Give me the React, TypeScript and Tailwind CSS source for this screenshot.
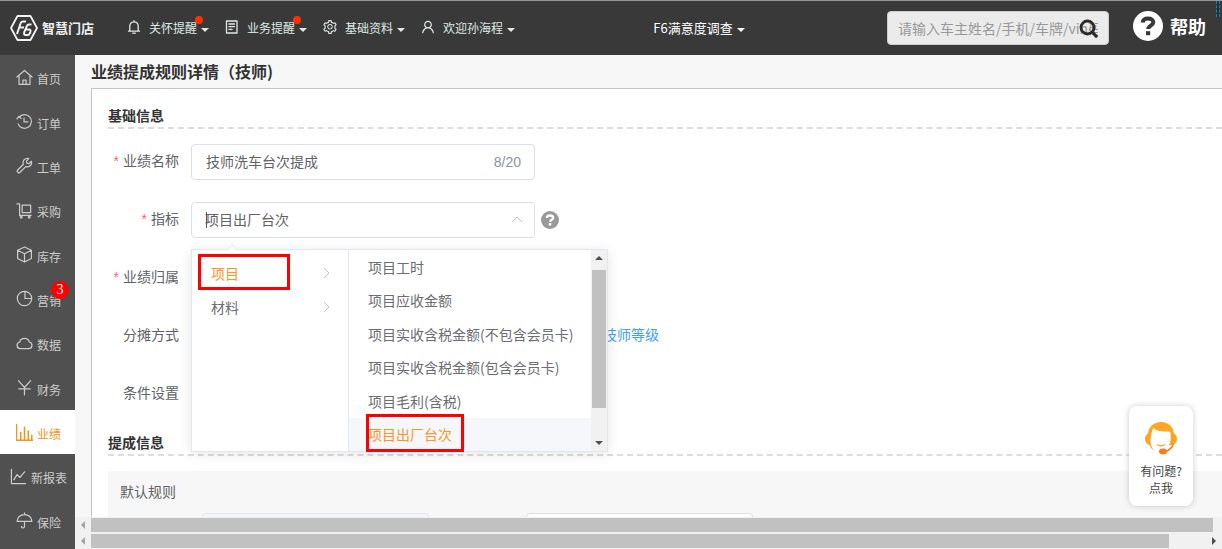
import { useState } from "react";
import type { ReactNode } from "react";
import { AiOutlineSetting, AiOutlineUser } from "react-icons/ai";

const line = {
  fill: "none",
  stroke: "currentColor",
  strokeWidth: 1.3,
  strokeLinejoin: "round" as const,
  strokeLinecap: "round" as const,
};

function SideIcon({ children }: { children: ReactNode }) {
  return (
    <svg viewBox="0 0 18 18" className="mb-1 size-[17px] shrink-0" aria-hidden="true" {...line}>
      {children}
    </svg>
  );
}

const menu = [
  { name: "首页", icon: <path d="M1 8.5 9 1.5l8 7M3.2 7v9.3h11.6V7M7.3 16.3v-4.5h3.4v4.5" /> },
  {
    name: "订单",
    icon: (
      <>
        <path d="M2.2 11.5A7.3 7.3 0 1 0 3.3 4.4M1 6.2l2-2.6 2.3 2" />
        <path d="M8.5 5.5v4h4" />
      </>
    ),
  },
  {
    name: "工单",
    icon: (
      <path d="M13.6 1.7a4.6 4.6 0 0 0-5.8 6L1.6 14a1.3 1.3 0 0 0 0 1.8l.6.6a1.3 1.3 0 0 0 1.8 0l6.3-6.2a4.6 4.6 0 0 0 6-5.7l-2.6 2.6-2.2-.6-.5-2.2z" />
    ),
  },
  {
    name: "采购",
    icon: (
      <>
        <path d="M1 2h2.8v12.2H16M6.5 3.2h9v8h-9z" />
        <circle cx="5.5" cy="16" r="1" />
        <circle cx="14" cy="16" r="1" />
      </>
    ),
  },
  { name: "库存", icon: <path d="M9 1 16.3 4.5v8.8L9 17l-7.3-3.7V4.5zM1.7 4.5 9 8.2l7.3-3.7M9 8.2V17" /> },
  {
    name: "营销",
    badge: 3,
    icon: (
      <>
        <circle cx="9" cy="9" r="7.6" />
        <path d="M9.5 1.4V9h7" />
      </>
    ),
  },
  {
    name: "数据",
    icon: <path d="M4.5 14.5a3.6 3.6 0 0 1-.6-7.1 5.3 5.3 0 0 1 10.2 0 3.6 3.6 0 0 1-.6 7.1z" />,
  },
  { name: "财务", icon: <path d="M2.5 1.8 9 9l6.5-7.2M9 9v7.7M3 10.5h12" /> },
  {
    name: "业绩",
    active: true,
    icon: <path d="M.5 0v17.3H18M5 17V9M9 17V3.5M13 17V7.5M16.7 17v-5" strokeWidth="1.6" />,
  },
  { name: "新报表", icon: <path d="M1.5 1.5v15h15M4 12.5l3.5-5.5 3 3 5-6" /> },
  {
    name: "保险",
    icon: <path d="M9 1v1.7M1.2 10a7.8 7.3 0 0 1 15.6 0zM9 10v5.3a1.6 1.6 0 0 1-3.2 0" />,
  },
];

const indicators = [
  "项目工时",
  "项目应收金额",
  "项目实收含税金额(不包含会员卡)",
  "项目实收含税金额(包含会员卡)",
  "项目毛利(含税)",
  "项目出厂台次",
];

function Caret() {
  return (
    <svg viewBox="0 0 8 4" className="mt-1 h-1 w-2" aria-hidden="true">
      <path d="M0 0h8L4 4z" fill="currentColor" />
    </svg>
  );
}

function NavItem({ icon, label, dot }: { icon: ReactNode; label: string; dot?: boolean }) {
  return (
    <button className="flex items-center text-xs text-[#dfe9e5]">
      <span className="mr-2 mb-0.5 flex w-3.5 justify-center text-base">{icon}</span>
      <span className="relative">
        {label}
        {dot && <i className="absolute -top-1 -right-1.5 size-2 rounded-full bg-[#ff3000]" />}
      </span>
      <span className="ml-1">
        <Caret />
      </span>
    </button>
  );
}

function QuestionMark({ className }: { className: string }) {
  return (
    <svg viewBox="0 0 20 20" className={className} fill="none" stroke="currentColor" aria-hidden="true">
      <path d="M4.5 6.500C5 3.700 7.200 2.400 10 2.400c3.200 0 5.300 1.600 5.300 3.900 0 3.400-5.100 3.200-5.100 6.700" strokeWidth="4" />
      <path d="M8 15.200h4.200v4H8z" fill="currentColor" stroke="none" />
    </svg>
  );
}

function Header() {
  return (
    <header className="relative flex h-[55px] shrink-0 items-center border-t border-[#999] bg-[#393939] text-white">
      <a href="#" className="ml-2.5 flex w-[117px] shrink-0 items-center gap-1">
        <svg viewBox="0 0 28 26" className="h-[26px] w-7" fill="none" stroke="#f2f2f2" aria-hidden="true">
          <path d="M7.5 1h13L27 13l-6.500 12h-13L1 13z" strokeWidth="1.8" strokeLinejoin="round" />
          <path d="M7 19 10.500 8.500q.6-2 2.500-2H16M9.500 12.500h4.500" strokeWidth="2" />
          <path d="M21.500 9.500H19q-1.500 0-2.200 1.600l-2.500 6q-1 3 1.700 3h1.500q1.700 0 2.300-1.700l.6-1.800q.6-2-1.400-2h-3.300" strokeWidth="2" />
        </svg>
        <span className="text-[13px] font-bold text-[#eee]">智慧门店</span>
      </a>
      <nav className="flex shrink-0 items-center gap-4">
        <NavItem
          icon={
            <svg viewBox="0 0 14 14" className="size-3.5" aria-hidden="true" {...line}>
              <path d="M7 .7v1M2.800 11V6a4.200 4.200 0 0 1 8.400 0v5M1.500 11.200h11M5.700 13.200h2.600" />
            </svg>
          }
          label="关怀提醒"
          dot
        />
        <NavItem
          icon={
            <svg viewBox="0 0 14 14" className="size-3.5" aria-hidden="true" {...line}>
              <path d="M1.500 1h10.500v12H1.500zM4 4h5.500M4 6.700h5.500M4 9.400h3" />
            </svg>
          }
          label="业务提醒"
          dot
        />
        <NavItem icon={<AiOutlineSetting className="shrink-0" />} label="基础资料" />
        <NavItem icon={<AiOutlineUser className="shrink-0" />} label="欢迎孙海程" />
      </nav>
      <div className="flex flex-1 justify-center pr-1">
        <button className="flex items-center gap-1 text-[13px]">
          F6满意度调查
          <Caret />
        </button>
      </div>
      <div className="relative w-[222px] shrink-0">
        <input
          type="text"
          aria-label="搜索"
          placeholder="请输入车主姓名/手机/车牌/vin码"
          className="block h-[34px] w-full rounded border border-[#ccc] bg-[#ebebeb] px-2.5 text-sm placeholder:text-[#999]"
        />
        <button aria-label="查询" className="absolute top-2 right-2.5">
          <svg viewBox="0 0 20 20" className="size-5" fill="none" stroke="#2b2b2b" aria-hidden="true">
            <circle cx="8.500" cy="8.500" r="6.500" strokeWidth="2.800" />
            <path d="m13.200 13.200 5 5" strokeWidth="3.200" />
          </svg>
        </button>
      </div>
      <a href="#" className="mr-4 ml-6 flex shrink-0 items-center gap-[7px] text-lg font-bold">
        <span className="mb-1 flex size-[30px] items-center justify-center rounded-full bg-white">
          <QuestionMark className="size-5 text-[#393939]" />
        </span>
        <span className="mb-1">帮助</span>
      </a>
      <i className="absolute top-0 right-0.5 h-4 w-1 border-x border-dashed border-[#1f7fb0] bg-[#20323c]" />
    </header>
  );
}

function Sidebar() {
  return (
    <aside className="w-[75px] shrink-0 bg-[#505050] pb-1.5">
      <ul className="flex h-full flex-col">
        {menu.map((m) => (
          <li key={m.name} className="min-h-0 flex-1">
            <a
              href="#"
              className={
                m.active
                  ? "flex h-full items-center justify-center gap-1 bg-white pt-1 pl-0.5 text-xs text-[#f5921e]"
                  : "flex h-full items-center justify-center gap-1 pt-1 pl-0.5 text-xs text-[#ccc]"
              }
            >
              <SideIcon>{m.icon}</SideIcon>
              <span className="relative">
                {m.name}
                {m.badge && (
                  <b className="absolute -top-3 -right-2 flex size-[18px] items-center justify-center rounded-full bg-[#f00] font-['Liberation_Serif',serif] text-sm font-normal text-white">
                    {m.badge}
                  </b>
                )}
              </span>
            </a>
          </li>
        ))}
      </ul>
    </aside>
  );
}

function FormRow({ label, htmlFor, required, children }: { label: string; htmlFor?: string; required?: boolean; children?: ReactNode }) {
  return (
    <div className="flex h-9 items-center">
      <label htmlFor={htmlFor} className="w-[83px] shrink-0 pr-3 pb-1 text-right text-[#606266]">
        {required && <span className="mr-1 font-['Liberation_Sans',sans-serif] text-[#f56c6c]">*</span>}
        {label}
      </label>
      {children}
    </div>
  );
}

function ScrollArrow({ d, className }: { d: string; className?: string }) {
  return (
    <svg viewBox="0 0 8 8" className={className ?? "size-2"} aria-hidden="true">
      <path d={d} fill="currentColor" />
    </svg>
  );
}

function CascaderMenu({ value, onPick }: { value: string; onPick: (v: string) => void }) {
  return (
    <div className="absolute top-[47px] left-0 z-10 flex h-[203px] w-[417px] border border-[#e4e7ed] bg-white shadow-[0_2px_12px_rgba(0,0,0,0.1)]">
      <i className="absolute -top-1 left-9 size-2 rotate-45 border-t border-l border-[#e9ebf0] bg-white" />
      <ul className="w-[157px] shrink-0 border-r border-[#e4e7ed] pt-1.5 text-[#6b6d71]">
        {["项目", "材料"].map((g, i) => (
          <li key={g}>
            <button
              className={
                i === 0
                  ? "flex h-[34px] w-full items-center justify-between pr-[18px] pl-[19px] text-[#ff9326]"
                  : "flex h-[34px] w-full items-center justify-between pr-[18px] pl-[19px]"
              }
            >
              {g}
              <svg viewBox="0 0 7 12" className="h-3 w-[7px]" fill="none" stroke="#b9c3d3" aria-hidden="true">
                <path d="m1 1 5 5-5 5" />
              </svg>
            </button>
          </li>
        ))}
      </ul>
      <ul className="grid flex-1 grid-rows-6 text-[#6b6d71]">
        {indicators.map((name) => (
          <li key={name}>
            <button
              onClick={() => onPick(name)}
              className={
                name === value
                  ? "h-full w-full bg-[#f5f7fa] pl-[19px] text-left text-[#ff9326]"
                  : "h-full w-full pl-[19px] text-left"
              }
            >
              {name}
            </button>
          </li>
        ))}
      </ul>
      <div className="flex w-4 shrink-0 flex-col items-center bg-[#f1f1f1] py-1 text-[#505050]">
        <ScrollArrow d="M0 6h8L4 2z" />
        <i className="mt-2 h-[138px] w-3.5 bg-[#c1c1c1]" />
        <ScrollArrow d="M0 2h8L4 6z" className="mt-auto size-2" />
      </div>
      <i className="absolute top-1 left-1.5 h-9 w-[92px] border-3 border-[#f00]" />
      <i className="absolute top-[164px] left-[174px] h-[38px] w-[98px] border-3 border-[#f00]" />
    </div>
  );
}

function SectionTitle({ children }: { children: ReactNode }) {
  return <h2 className="border-b-2 border-dashed border-[#ddd] pb-0.5 text-sm font-bold text-[#333]">{children}</h2>;
}

export default function App() {
  const [name, setName] = useState("技师洗车台次提成");
  const [indicator, setIndicator] = useState("项目出厂台次");

  return (
    <div className="relative flex h-screen flex-col overflow-hidden bg-[#f7f7f7] font-['Noto_Sans_CJK_SC',sans-serif] text-sm">
      <Header />
      <div className="flex min-h-0 flex-1">
        <Sidebar />
        <div className="flex min-w-0 flex-1 flex-col">
          <h1 className="shrink-0 pt-1 pb-[5px] pl-4 text-base font-bold text-[#333]">业绩提成规则详情（技师)</h1>
          <main className="ml-4 min-h-0 flex-1 overflow-hidden border-t border-l border-[#c4c4c4] bg-white pt-4 pl-4">
            <SectionTitle>基础信息</SectionTitle>
            <div className="mt-[15px] flex flex-col gap-[22px]">
              <FormRow label="业绩名称" htmlFor="rule-name" required>
                <div className="relative w-[344px]">
                  <input
                    id="rule-name"
                    value={name}
                    onChange={(e) => setName(e.target.value)}
                    className="block h-9 w-full rounded border border-[#dcdfe6] px-3.5 pb-0.5 text-[#606266]"
                  />
                  <span className="absolute top-2 right-3.5 font-['Liberation_Sans',sans-serif] text-[#909399]">{name.length}/20</span>
                </div>
              </FormRow>
              <FormRow label="指标" htmlFor="indicator" required>
                <div className="relative w-[344px]">
                  <input
                    id="indicator"
                    value={indicator}
                    readOnly
                    className="block h-9 w-full rounded border border-[#dcdfe6] px-[13px] pb-0.5 text-[#606266]"
                  />
                  <i className="absolute top-2.5 left-[15px] h-4 w-px bg-[#555]" />
                  <svg viewBox="0 0 12 7" className="absolute top-3.5 right-3 h-[7px] w-3" fill="none" stroke="#c0c4cc" aria-hidden="true">
                    <path d="m1 6 5-5 5 5" />
                  </svg>
                  <CascaderMenu value={indicator} onPick={setIndicator} />
                </div>
                <span className="ml-1.5 flex size-[18px] items-center justify-center rounded-full bg-[#999] text-white">
                  <QuestionMark className="size-3" />
                </span>
              </FormRow>
              <FormRow label="业绩归属" required />
              <FormRow label="分摊方式">
                <a href="#" className="ml-[412px] pb-1 text-[#409eff]">
                  技师等级
                </a>
              </FormRow>
              <FormRow label="条件设置" />
            </div>
            <div className="mt-5">
              <SectionTitle>提成信息</SectionTitle>
            </div>
            <section className="mt-[15px] bg-[#f7f7f7] pt-2.5 pb-6">
              <h3 className="pl-3 text-[#606266]">默认规则</h3>
              <div className="mt-3 flex gap-[97px] pl-[94px]">
                <input aria-label="规则条件" disabled className="h-9 w-[227px] rounded border border-[#e4e7ed] bg-[#f5f7fa]" />
                <input aria-label="提成金额" className="h-9 w-[227px] rounded border border-[#dcdfe6] bg-white" />
              </div>
            </section>
          </main>
          <div className="flex h-4 shrink-0 items-center bg-[#f1f1f1] pr-[9px] text-[#a3a3a3]">
            <ScrollArrow d="M6 0v8L2 4z" className="mx-1 size-2" />
            <i className="h-3.5 flex-1 bg-[#c1c1c1]" />
          </div>
          <div className="flex h-4 shrink-0 items-center bg-[#f1f1f1] text-[#a3a3a3]">
            <ScrollArrow d="M6 0v8L2 4z" className="mx-1 size-2" />
            <i className="h-3.5 flex-1 bg-[#c1c1c1]" />
            <ScrollArrow d="M2 0v8l4-4z" className="mr-1 ml-[41px] size-2 text-[#505050]" />
          </div>
        </div>
      </div>
      <button className="absolute right-[29px] bottom-[43px] z-20 flex w-16 flex-col items-center rounded-lg bg-white pt-[15px] pb-2.5 text-xs leading-[17px] text-[#444] shadow-[0_0_6px_rgba(0,0,0,0.2)]">
        <svg viewBox="0 0 34 34" className="mb-[7px] size-[34px]" aria-hidden="true">
          <path
            d="M17 1C9.500 1 4.800 6 4 12.500 2 13.500 1 15.500 1 18c0 3 2 5.500 4.500 6 1 2.500 2.500 4.500 5 6C8 27.500 6.500 24 6.500 20c0-2 .2-4.500.8-7 .5-2.500 1.200-4.500 2.200-6 2.500 3 8.500 3.500 16.500 3.500.7 3 1 6 .5 9-.3 2-1 3.500-1.800 5l1.800-.5C32 23.500 33 20.500 33 18c0-2.700-1-4.500-3-5.500C29.200 6 24.500 1 17 1z"
            fill="#ffa51f"
          />
          <path d="M13 23.500q4 2.700 8 0" fill="none" stroke="#ffa51f" strokeWidth="1.500" />
          <path d="M29.500 22q-1.500 7-9 8.500" fill="none" stroke="#ff7a1a" strokeWidth="1.500" />
          <ellipse cx="19" cy="30.500" rx="4" ry="3" fill="#ff7a1a" />
        </svg>
        <span>有问题?</span>
        <span>点我</span>
      </button>
    </div>
  );
}
